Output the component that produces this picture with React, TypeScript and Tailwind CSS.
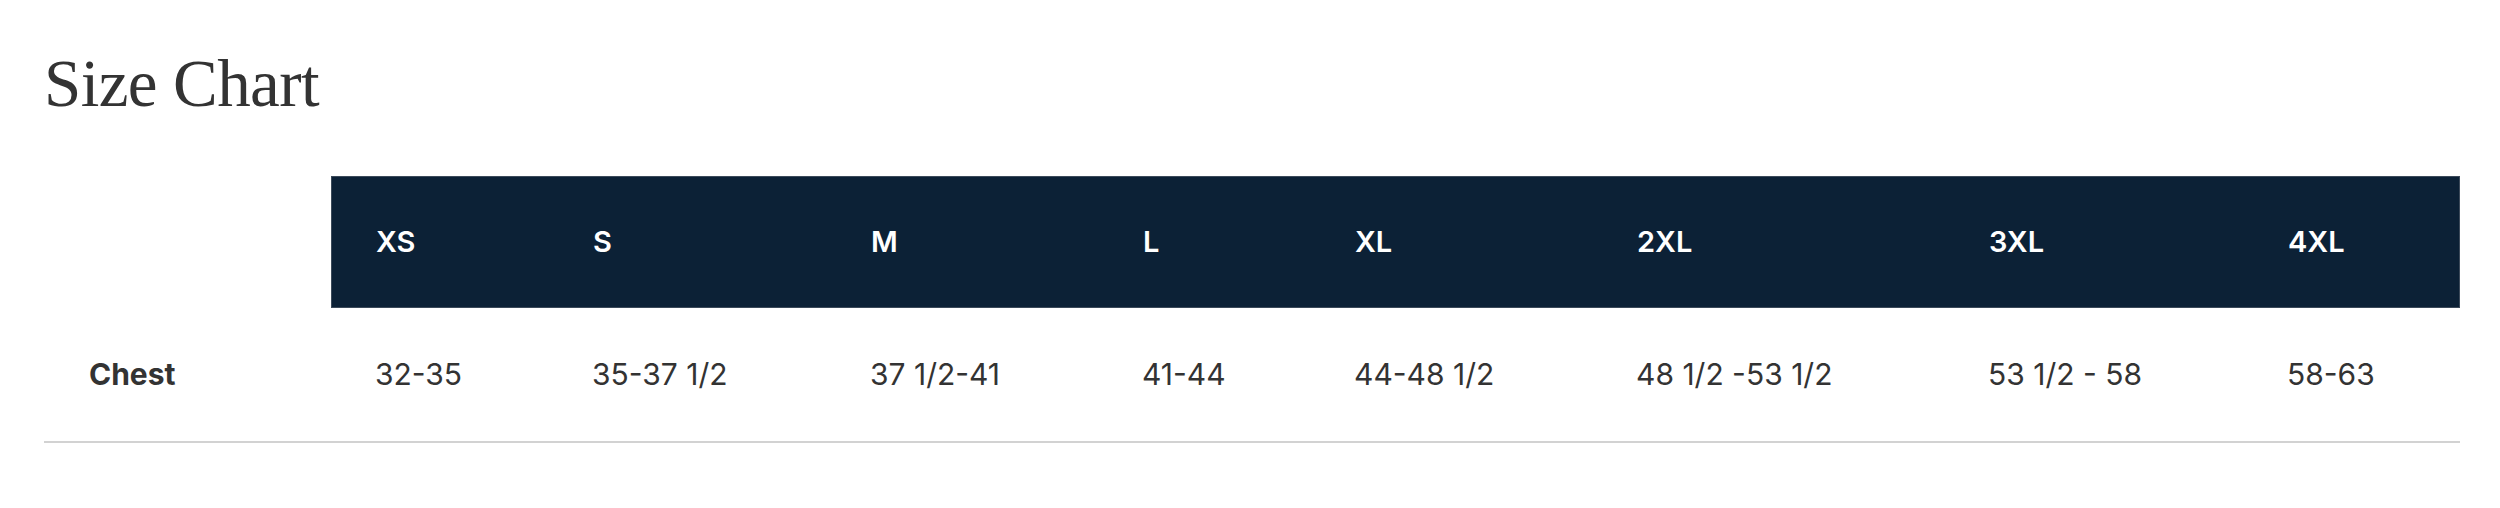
const sizes = ["XS", "S", "M", "L", "XL", "2XL", "3XL", "4XL"];
const chest = ["32-35", "35-37 1/2", "37 1/2-41", "41-44", "44-48 1/2", "48 1/2 -53 1/2", "53 1/2 - 58", "58-63"];

const cols =
  "grid grid-cols-[287px_217px_278px_272px_212px_282px_352px_299px_217px]";

function SizeChart() {
  return (
    <section className="pt-[50px] pl-[44px] pr-[40px] text-[#333]">
      <h2 className="h-[66px] font-['Liberation_Serif',serif] text-[67px] leading-none font-normal tracking-[-0.6px] text-[#333]">
        Size Chart
      </h2>
      <div className="mt-[60px] font-['Inter',sans-serif]">
        <div className={cols}>
          <div />
          <div className="col-span-8 grid grid-cols-[217px_278px_272px_212px_282px_352px_299px_217px] h-[132px] items-center border border-[#3c4a5a] bg-[#0c2136] text-[29px] font-semibold text-white">
            {sizes.map((s) => (
              <div key={s} className="pl-[44px]">
                {s}
              </div>
            ))}
          </div>
        </div>
        <div className={`${cols} h-[135px] items-center border-b-2 border-[#d2d2d2] text-[30px]`}>
          <div className="pl-[45px] font-bold">Chest</div>
          {chest.map((c, i) => (
            <div key={i} className="pl-[44px]">
              {c}
            </div>
          ))}
        </div>
      </div>
    </section>
  );
}

export default function App() {
  return (
    <div className="h-[508px] w-[2500px] bg-white">
      <SizeChart />
    </div>
  );
}
